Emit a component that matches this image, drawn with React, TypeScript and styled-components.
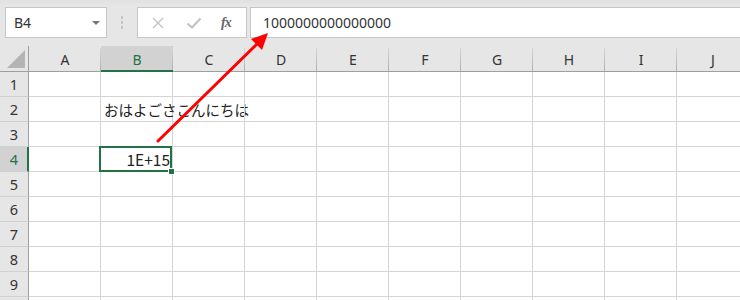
import * as React from 'react';
import styled, { createGlobalStyle, css } from 'styled-components';

const GlobalStyle = createGlobalStyle`
  html, body {
    margin: 0;
    padding: 0;
    width: 740px;
    height: 300px;
    overflow: hidden;
    background: #e6e6e6;
  }
`;

const GREEN = '#217346';
const UI_FONT = `"Noto Sans", "Noto Sans CJK JP", sans-serif`;
const CELL_FONT = `"Noto Sans CJK JP", "Noto Sans", sans-serif`;

const Page = styled.div`
  position: relative;
  width: 740px;
  height: 300px;
  overflow: hidden;
  background: #e6e6e6;
  font-family: ${UI_FONT};
`;

const Toolbar = styled.div`
  display: flex;
  align-items: flex-start;
  height: 46px;
  padding: 7px 0 0 5px;
  box-sizing: border-box;
  background: linear-gradient(#e1e1e1, #e6e6e6 6px);
`;

const NameBox = styled.div`
  display: flex;
  align-items: center;
  justify-content: space-between;
  width: 102px;
  height: 31px;
  box-sizing: border-box;
  padding: 0 6px 0 8px;
  background: #fff;
  border: 1px solid #c6c6c6;
  font-size: 14px;
  color: #333;
`;

const Caret = styled.span`
  width: 0;
  height: 0;
  border-left: 4px solid transparent;
  border-right: 4px solid transparent;
  border-top: 4px solid #777;
  margin-top: 1px;
`;

const Grip = styled.div`
  width: 30px;
  height: 31px;
  display: flex;
  flex-direction: column;
  align-items: center;
  justify-content: center;
  gap: 2px;
  & > i {
    width: 2px;
    height: 3px;
    background: #c4c4c4;
  }
`;

const FnBox = styled.div`
  display: flex;
  align-items: center;
  width: 110px;
  height: 31px;
  box-sizing: border-box;
  background: #fff;
  border: 1px solid #c6c6c6;
  padding-left: 12px;
`;

const IconBtn = styled.span`
  width: 16px;
  height: 16px;
  display: flex;
  align-items: center;
  justify-content: center;
  margin-right: 20px;
`;

const Fx = styled.span`
  font-family: "Liberation Serif", "DejaVu Serif", serif;
  font-style: italic;
  font-weight: bold;
  font-size: 14px;
  color: #666;
  letter-spacing: -1px;
  margin-left: -1px;
`;

const FormulaBar = styled.div`
  flex: 1;
  height: 31px;
  margin-left: 3px;
  margin-right: -2px;
  box-sizing: border-box;
  display: flex;
  align-items: center;
  padding-left: 12px;
  background: #fff;
  border: 1px solid #c6c6c6;
  font-size: 14px;
  color: #333;
`;

const Sheet = styled.div`
  display: grid;
  grid-template-columns: 29px repeat(10, 72px);
  grid-template-rows: 26px;
  grid-auto-rows: 25px;
  background: #fff;
`;

const Corner = styled.div`
  position: relative;
  background: #e6e6e6;
  border-right: 1px solid #9f9f9f;
  border-bottom: 1px solid #9f9f9f;
  box-sizing: border-box;
  &::after {
    content: '';
    position: absolute;
    right: 3px;
    bottom: 3px;
    width: 0;
    height: 0;
    border-left: 18px solid transparent;
    border-bottom: 18px solid #b4b4b4;
  }
`;

const ColHead = styled.div<{ $selected?: boolean }>`
  position: relative;
  display: flex;
  align-items: center;
  justify-content: center;
  box-sizing: border-box;
  background: #e6e6e6;
  border-bottom: 1px solid #9f9f9f;
  font-size: 14px;
  color: #333;
  padding-top: 1px;
  &::after {
    content: '';
    position: absolute;
    right: 0;
    top: 2px;
    bottom: 0;
    width: 1px;
    background: linear-gradient(#d6d6d6, #b0b0b0);
  }
  ${(p) =>
    p.$selected &&
    css`
      background: #d2d2d2;
      color: ${GREEN};
      border-bottom: 2px solid ${GREEN};
      padding-top: 2px;
    `}
`;

const RowHead = styled.div<{ $selected?: boolean }>`
  display: flex;
  align-items: center;
  justify-content: center;
  box-sizing: border-box;
  background: #e6e6e6;
  border-right: 1px solid #9f9f9f;
  border-bottom: 1px solid #d0d0d0;
  font-size: 14.5px;
  color: #333;
  ${(p) =>
    p.$selected &&
    css`
      background: #d2d2d2;
      color: ${GREEN};
      border-right: 2px solid ${GREEN};
      padding-left: 1px;
    `}
`;

const Cell = styled.div<{ $align?: 'left' | 'right'; $active?: boolean }>`
  position: relative;
  display: flex;
  align-items: center;
  justify-content: ${(p) => (p.$align === 'right' ? 'flex-end' : 'flex-start')};
  box-sizing: border-box;
  padding: 0 2px 0 3px;
  border-right: 1px solid #d4d4d4;
  border-bottom: 1px solid #d4d4d4;
  font-family: ${CELL_FONT};
  font-size: ${(p) => (p.$align === 'right' ? '15.5px' : '14.5px')};
  color: #222;
  white-space: nowrap;
  ${(p) =>
    p.$active &&
    css`
      z-index: 2;
      &::before {
        content: '';
        position: absolute;
        top: -1px;
        left: -2px;
        right: 0;
        bottom: -1px;
        border: 2px solid ${GREEN};
        pointer-events: none;
      }
      &::after {
        content: '';
        position: absolute;
        right: -3px;
        bottom: -4px;
        width: 5px;
        height: 5px;
        background: ${GREEN};
        border: 1px solid #fff;
      }
    `}
`;

const Overlay = styled.svg`
  position: absolute;
  left: 0;
  top: 0;
  pointer-events: none;
  z-index: 5;
`;

const COLS = ['A', 'B', 'C', 'D', 'E', 'F', 'G', 'H', 'I', 'J'];
// row 10 only peeks in at the bottom edge, so it gets no label
const ROWS = [1, 2, 3, 4, 5, 6, 7, 8, 9, 10];
const VISIBLE_LABELS = 9;

const data: Record<string, { text: string; align?: 'left' | 'right' }> = {
  B2: { text: 'おはよごさこんにちは' },
  B4: { text: '1E+15', align: 'right' },
};

export default function App() {
  const active = 'B4';
  return (
    <Page>
      <GlobalStyle />
      <Toolbar>
        <NameBox>
          <span>{active}</span>
          <Caret />
        </NameBox>
        <Grip>
          <i />
          <i />
          <i />
        </Grip>
        <FnBox>
          <IconBtn>
            <svg width="14" height="14" viewBox="0 0 14 14">
              <path d="M2 2 L12 12 M12 2 L2 12" stroke="#c3c3c3" strokeWidth="1.4" fill="none" />
            </svg>
          </IconBtn>
          <IconBtn>
            <svg width="16" height="14" viewBox="0 0 16 14">
              <path d="M1.5 7.5 L6 11.5 L14.5 2.5" stroke="#c3c3c3" strokeWidth="2.2" fill="none" />
            </svg>
          </IconBtn>
          <Fx>fx</Fx>
        </FnBox>
        <FormulaBar>1000000000000000</FormulaBar>
      </Toolbar>
      <Sheet>
        <Corner />
        {COLS.map((c) => (
          <ColHead key={c} $selected={c === active[0]}>
            {c}
          </ColHead>
        ))}
        {ROWS.map((r) => (
          <React.Fragment key={r}>
            <RowHead $selected={String(r) === active.slice(1)}>
              {r <= VISIBLE_LABELS ? r : null}
            </RowHead>
            {COLS.map((c) => {
              const id = c + r;
              const d = data[id];
              return (
                <Cell key={id} $align={d?.align} $active={id === active}>
                  {d?.text}
                </Cell>
              );
            })}
          </React.Fragment>
        ))}
      </Sheet>
      <Overlay width="740" height="300" viewBox="0 0 740 300">
        <line x1="158" y1="141" x2="257" y2="44" stroke="#ff0000" strokeWidth="3" strokeLinecap="round" />
        <polygon points="268,33 262,50 251,39" fill="#ff0000" />
      </Overlay>
    </Page>
  );
}
